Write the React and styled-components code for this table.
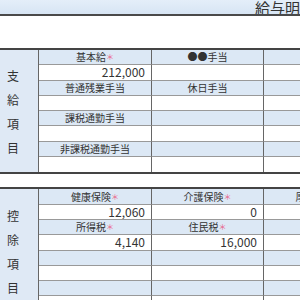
import React from "react";
import styled, { createGlobalStyle } from "styled-components";

const Global = createGlobalStyle`
  html, body { margin: 0; padding: 0; background: #fff; overflow: hidden; }
  body { font-family: "Noto Sans CJK JP", "Noto Sans", sans-serif; color: #333; }
`;

const Page = styled.div`
  width: 300px;
  height: 300px;
  overflow: hidden;
  display: flex;
  flex-direction: column;
`;

const TitleBar = styled.header`
  flex: none;
  height: 14px;
  background: linear-gradient(#e4eef9, #d7e5f4);
  border-bottom: 2px solid #4a4a4a;
  padding-left: 255px;
  white-space: nowrap;
  overflow: hidden;
`;

const Title = styled.h1`
  margin: 0;
  font-size: 15px;
  font-weight: 400;
  line-height: 15px;
  color: #333;
`;

const InfoArea = styled.div`
  flex: none;
  height: 32px;
`;

const Section = styled.section`
  flex: none;
  display: grid;
  grid-template-columns: 39px 113px 112px 112px;
  grid-template-rows: repeat(8, 15.3px);
  width: 376px;
  border-top: 2px solid #444;
  border-bottom: 2px solid #444;
`;

const Gap = styled.div`
  flex: none;
  height: 13px;
`;

const Label = styled.div`
  grid-row: 1 / -1;
  grid-column: 1;
  background: #dfe9f5;
  border-right: 1px solid #666;
  display: flex;
  flex-direction: column;
  justify-content: center;
  padding: 2px 0 0 7px;
  font-size: 12px;
  line-height: 24px;
  color: #333;
`;

const Cell = styled.div`
  box-sizing: border-box;
  border-right: 1px solid #666;
  border-bottom: ${(p) => (p.$last ? "none" : "1px solid #999")};
  display: flex;
  align-items: center;
  white-space: nowrap;
  overflow: visible;
  background: ${(p) => (p.$head ? "#dce8f5" : "#fff")};
  justify-content: ${(p) => (p.$head ? "center" : "flex-end")};
  font-size: ${(p) => (p.$head ? "10px" : "12px")};
  padding-right: ${(p) => (p.$head ? "0" : "6px")};
  line-height: 1;
  color: #333;
`;

const Mark = styled.span`
  color: #e8648a;
  font-size: 8px;
  line-height: 1;
`;

const earnings = [
  ["基本給*", "●●手当", ""],
  ["212,000", "", ""],
  ["普通残業手当", "休日手当", ""],
  ["", "", ""],
  ["課税通勤手当", "", ""],
  ["", "", ""],
  ["非課税通勤手当", "", ""],
  ["", "", ""],
];

const deductions = [
  ["健康保険*", "介護保険*", "厚生年金*"],
  ["12,060", "0", ""],
  ["所得税*", "住民税*", ""],
  ["4,140", "16,000", ""],
  ["", "", ""],
  ["", "", ""],
  ["", "", ""],
  ["", "", ""],
];

function Text({ value }) {
  if (value.endsWith("*")) {
    return (
      <>
        {value.slice(0, -1)}
        <Mark>＊</Mark>
      </>
    );
  }
  return value;
}

function Block({ label, rows }) {
  return (
    <Section>
      <Label>
        {label.split("").map((c, i) => (
          <span key={i}>{c}</span>
        ))}
      </Label>
      {rows.map((row, r) =>
        row.map((v, c) => (
          <Cell key={`${r}-${c}`} $head={r % 2 === 0} $last={r === rows.length - 1}>
            <Text value={v} />
          </Cell>
        ))
      )}
    </Section>
  );
}

export default function App() {
  return (
    <Page>
      <Global />
      <TitleBar>
        <Title>給与明細書</Title>
      </TitleBar>
      <InfoArea />
      <Block label="支給項目" rows={earnings} />
      <Gap />
      <Block label="控除項目" rows={deductions} />
    </Page>
  );
}
